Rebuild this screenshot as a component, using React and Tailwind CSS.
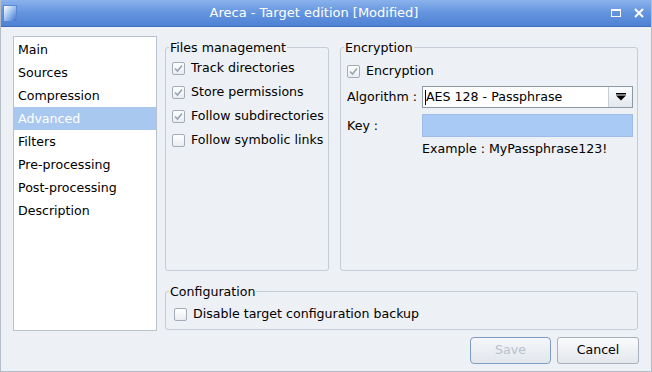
import React from "react";

const font = { fontFamily: '"DejaVu Sans", "Liberation Sans", sans-serif' };

function Check({ checked }) {
  return (
    <span className="inline-flex w-[13px] h-[13px] shrink-0 items-center justify-center rounded-[2px] border border-[#a3abb6] bg-gradient-to-b from-[#ffffff] to-[#e9edf2]">
      {checked && (
        <svg width="11" height="11" viewBox="0 0 11 11">
          <path d="M2 5.5 L4.5 8 L9 2.5" fill="none" stroke="#9aa3ad" strokeWidth="1.6" />
        </svg>
      )}
    </span>
  );
}

function CheckRow({ checked, label, gap = "gap-[6px]" }) {
  return (
    <div className={`flex items-center h-[24px] whitespace-nowrap ${gap}`}>
      <Check checked={checked} />
      <span>{label}</span>
    </div>
  );
}

function Group({ title, className, children }) {
  return (
    <fieldset className={`border border-[#c5ccd5] rounded-[3px] ${className}`}>
      <legend className="ml-[3px] px-[1px] leading-[15px] whitespace-nowrap">{title}</legend>
      {children}
    </fieldset>
  );
}

export default function App() {
  const items = [
    "Main",
    "Sources",
    "Compression",
    "Advanced",
    "Filters",
    "Pre-processing",
    "Post-processing",
    "Description",
  ];
  return (
    <div
      style={font}
      className="w-[652px] h-[372px] flex flex-col bg-[#edf0f4] text-[12.6px] text-black border-x border-b border-[#b4bcc7] overflow-hidden"
    >
      {/* Title bar */}
      <div className="h-[27px] shrink-0 -mx-px flex items-center bg-gradient-to-b from-[#8ab2ec] via-[#6394de] to-[#4f82d5] border-b border-[#3f6cbc]">
        <div className="ml-[3px] w-[14px] h-[17px] bg-gradient-to-br from-[#ffffff] via-[#9ec0ef] to-[#3d73cf] border border-[#5b87d2]" />
        <div className="flex-1 text-center text-white text-[13px]">Areca - Target edition [Modified]</div>
        <div className="flex items-center gap-[13px] mr-[8px]">
          <svg width="10" height="8" viewBox="0 0 10 8">
            <rect x="0.5" y="0.5" width="9" height="7" fill="none" stroke="#ffffff" strokeWidth="1" />
            <line x1="0" y1="1.5" x2="10" y2="1.5" stroke="#ffffff" strokeWidth="1" />
          </svg>
          <svg width="10" height="10" viewBox="0 0 10 10">
            <path d="M1 1 L9 9 M9 1 L1 9" stroke="#ffffff" strokeWidth="2" />
          </svg>
        </div>
      </div>

      {/* Body */}
      <div className="flex-1 flex flex-col pl-[12px] pr-[13px] pt-[9px]">
        <div className="flex gap-[8px]">
          {/* List */}
          <div className="w-[144px] h-[295px] bg-white border border-[#b9c1cb] pt-px">
            {items.map((it) => (
              <div
                key={it}
                className={`h-[23px] flex items-center pl-[4px] pt-[2px] ${
                  it === "Advanced" ? "bg-[#a9c8f0] text-white" : ""
                }`}
              >
                {it}
              </div>
            ))}
          </div>

          {/* Right */}
          <div className="w-[473px] flex flex-col pt-[4px]">
            <div className="flex gap-[11px]">
              <Group title="Files management" className="w-[164px] h-[231px]">
                <div className="pl-[6px] pt-[1px]">
                  <CheckRow checked label="Track directories" />
                  <CheckRow checked label="Store permissions" />
                  <CheckRow checked label="Follow subdirectories" />
                  <CheckRow checked={false} label="Follow symbolic links" />
                </div>
              </Group>
              <Group title="Encryption" className="w-[298px] h-[231px]">
                <div className="pl-[6px] pr-[4px] pt-[4px]">
                  <CheckRow checked label="Encryption" />
                  <div className="flex items-center mt-[3px] h-[22px]">
                    <span className="w-[75px] whitespace-nowrap">Algorithm :</span>
                    <div className="flex-1 h-[22px] flex bg-white border border-[#8e99a6]">
                      <div className="flex-1 flex items-center pl-[2px]">
                        <span className="w-px h-[15px] bg-black" />
                        <span>AES 128 - Passphrase</span>
                      </div>
                      <div className="w-[24px] flex flex-col items-center justify-center border-l border-[#c7ced6] bg-gradient-to-b from-[#fbfcfd] to-[#e3e8ee]">
                        <svg width="10" height="8" viewBox="0 0 10 8">
                          <rect x="0" y="0" width="10" height="1.5" fill="#000" />
                          <path d="M0 2.5 L10 2.5 L5 7.5 Z" fill="#000" />
                        </svg>
                      </div>
                    </div>
                  </div>
                  <div className="flex items-center mt-[6px] h-[23px]">
                    <span className="w-[75px] pt-px">Key :</span>
                    <div className="flex-1 h-[23px] bg-[#a9caf4] border border-[#9dbde8]" />
                  </div>
                  <div className="ml-[75px] mt-[3px] h-[19px] flex items-center whitespace-nowrap">
                    Example : MyPassphrase123!
                  </div>
                </div>
              </Group>
            </div>
            <Group title="Configuration" className="mt-[13px] w-[473px] h-[46px]">
              <div className="pl-[8px] pt-[3px]">
                <CheckRow checked={false} label="Disable target configuration backup" />
              </div>
            </Group>
          </div>
        </div>

        {/* Buttons */}
        <div className="flex justify-end gap-[6px] mt-[6px] -mr-px">
          <div className="w-[81px] h-[27px] flex items-center justify-center rounded-[4px] border border-[#7f9cc2] bg-gradient-to-b from-[#f4f6f9] to-[#e2e7ed] text-[#b9c1cc]">
            Save
          </div>
          <div className="w-[82px] h-[27px] flex items-center justify-center rounded-[3px] border border-[#a9b1bc] bg-gradient-to-b from-[#fafbfc] to-[#e3e7ec]">
            Cancel
          </div>
        </div>
      </div>
    </div>
  );
}
